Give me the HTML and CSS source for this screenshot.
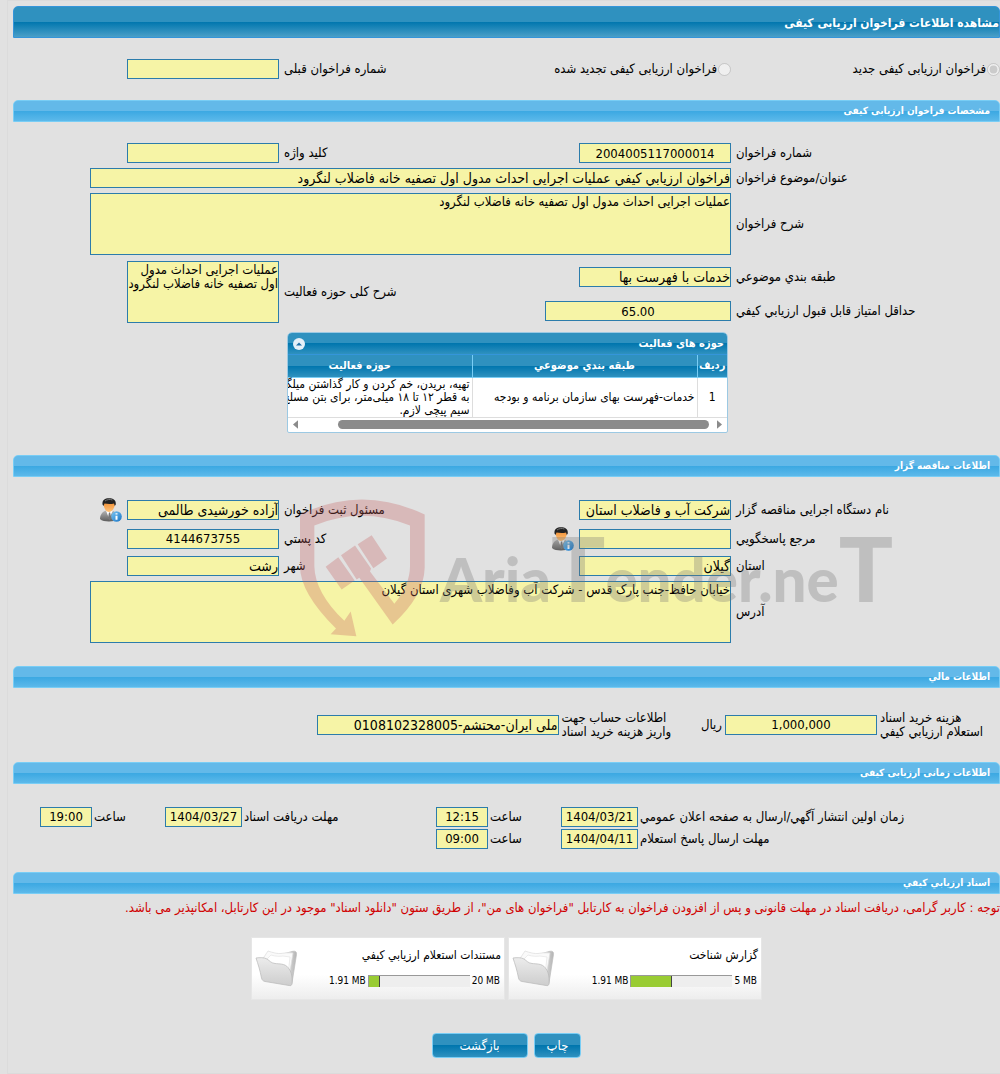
FILE: index.html
```html
<!DOCTYPE html>
<html lang="fa" dir="rtl">
<head>
    <meta charset="UTF-8">
    <meta name="viewport" content="width=device-width, initial-scale=1.0">
    <title>مشاهده اطلاعات فراخوان ارزیابی کیفی</title>
    <link rel="stylesheet" href="styles.css">
</head>
<body>

    <!-- Shared icons -->
    <svg class="sprite" aria-hidden="true">
        <defs>
            <linearGradient id="suit" x1="0" y1="0" x2="0" y2="1">
                <stop offset="0" stop-color="#b5b5b5"/>
                <stop offset="1" stop-color="#5c5c5c"/>
            </linearGradient>
            <linearGradient id="face" x1="0" y1="0" x2="0" y2="1">
                <stop offset="0" stop-color="#f08a2c"/>
                <stop offset="1" stop-color="#ffc37a"/>
            </linearGradient>
            <linearGradient id="info" x1="0" y1="0" x2="1" y2="1">
                <stop offset="0" stop-color="#7cc8f5"/>
                <stop offset="1" stop-color="#1672c4"/>
            </linearGradient>
            <linearGradient id="folderFront" x1="0" y1="0" x2="0" y2="1">
                <stop offset="0" stop-color="#ececec"/>
                <stop offset="1" stop-color="#cdcdcd"/>
            </linearGradient>
            <linearGradient id="folderBack" x1="0" y1="0" x2="1" y2="0">
                <stop offset="0" stop-color="#efefef"/>
                <stop offset="1" stop-color="#b4b4b4"/>
            </linearGradient>
        </defs>
        <symbol id="person" viewBox="0 0 24 24">
            <path d="M1 21c0-5 3-7.500 6-8.500h6c3.500 1 5.500 4 5.500 9-3 2.500-14 3-17.500-.5z" fill="url(#suit)"/>
            <path d="M7 12.500l3 8 4-8z" fill="#fff"/>
            <path d="M10 14.500l-1 5 1.500 3 1.500-3-.8-5z" fill="#777"/>
            <path d="M4.500 5c0 5 2.500 9 5.500 9s6-4 6-9c-2-2.500-9-2.500-11.500 0z" fill="url(#face)"/>
            <path d="M3.500 6.500C3 2 6 .3 10 .3s7.300 1.700 6.800 6.200l-1 1.500-.8-2.500c-3 .8-7 .5-9.500 0L4.500 8z" fill="#222"/>
            <path d="M6 3c2-1.500 5-2 7.500-1" stroke="#777" fill="none"/>
            <circle cx="17.500" cy="18.500" r="5.300" fill="url(#info)"/>
            <path d="M17.500 15.200v1.400M17.500 17.800v4" stroke="#fff" stroke-width="2"/>
        </symbol>
        <symbol id="folder" viewBox="0 0 44 40">
            <path d="M28 6l9-2.500c3-.8 5 0 4.500 3L37 35c-.3 1.500-1 2-2.500 1.500z" fill="url(#folderBack)" stroke="#bbb" stroke-width=".7"/>
            <path d="M7 12l6-9c4 1.500 10 3 13 2.500s7-1 12-.5l-4 24z" fill="#fafafa" stroke="#ddd" stroke-width=".7"/>
            <path d="M11 12l5-5c5 1.500 8 1.500 12 1l7 1-2 18z" fill="#fff" stroke="#e4e4e4" stroke-width=".7"/>
            <path d="M1 10c4-.6 8-.6 11 1 3 2 4 4 8 4.500s10 0 13 4c3 3.500 4.500 8 4 16-.2 1.800-1 2.500-3 2L10 33.500c-2-.4-3-1.500-3.500-3.500C5 22 3 16 1 10z" fill="url(#folderFront)" stroke="#b8b8b8" stroke-width=".7"/>
        </symbol>
    </svg>

    <div class="page">
        <h1 class="title">مشاهده اطلاعات فراخوان ارزیابی کیفی</h1>

        <div class="form kinds">
            <label class="radio"><input type="radio" name="kind" checked disabled>فراخوان ارزیابی کیفی جدید</label>
            <label class="radio second"><input type="radio" name="kind" disabled>فراخوان ارزیابی کیفی تجدید شده</label>
            <label class="l2" for="prevNo">شماره فراخوان قبلی</label>
            <input class="f2" id="prevNo" type="text" readonly>
        </div>

        <h2 class="bar">مشخصات فراخوان ارزیابی کیفی</h2>
        <div class="form specs">
            <label class="l1" for="callNo">شماره فراخوان</label>
            <input class="f1 num" id="callNo" type="text" value="2004005117000014" readonly>
            <label class="l2" for="keyword">کلید واژه</label>
            <input class="f2" id="keyword" type="text" readonly>

            <label class="l1" for="subject">عنوان/موضوع فراخوان</label>
            <input class="wide" id="subject" type="text" value="فراخوان ارزيابي كيفي عملیات اجرایی احداث مدول اول تصفیه خانه فاضلاب لنگرود" readonly>

            <label class="l1" for="desc">شرح فراخوان</label>
            <textarea class="wide" id="desc" readonly>عملیات اجرایی احداث مدول اول تصفیه خانه فاضلاب لنگرود</textarea>

            <label class="l1" for="category">طبقه بندي موضوعي</label>
            <input class="f1" id="category" type="text" value="خدمات با فهرست بها" readonly>
            <label class="l2 both" for="scope">شرح کلی حوزه فعالیت</label>
            <textarea class="f2 both" id="scope" readonly>عملیات اجرایی احداث مدول اول تصفیه خانه فاضلاب لنگرود</textarea>

            <label class="l1" for="score">حداقل امتياز قابل قبول ارزيابي كيفي</label>
            <input class="score num" id="score" type="text" value="65.00" readonly>

            <div class="panel">
                <div class="panel-head">
                    <span>حوزه های فعالیت</span>
                    <button class="collapse" type="button" aria-label="بستن">
                        <svg viewBox="0 0 12 12"><circle cx="6" cy="6" r="6" fill="#e4eff8"/><path d="M3 7.500L6 4.500l3 3z" fill="#1f6fa5"/></svg>
                    </button>
                </div>
                <div class="panel-view">
                    <table>
                        <colgroup><col class="c-row"><col class="c-cat"><col class="c-act"></colgroup>
                        <thead>
                            <tr><th>ردیف</th><th>طبقه بندي موضوعي</th><th>حوزه فعالیت</th></tr>
                        </thead>
                        <tbody>
                            <tr>
                                <td class="center">1</td>
                                <td>خدمات-فهرست بهای سازمان برنامه و بودجه</td>
                                <td>تهیه، بریدن، خم کردن و کار گذاشتن میلگرد<br>به قطر ۱۲ تا ۱۸ میلی‌متر، برای بتن مسلح با<br>سیم پیچی لازم.</td>
                            </tr>
                        </tbody>
                    </table>
                </div>
                <div class="scroll">
                    <svg viewBox="0 0 6 10"><path d="M0 0l6 5-6 5z" fill="#8b8b8b"/></svg>
                    <div class="track"><div class="thumb"></div></div>
                    <svg viewBox="0 0 6 10"><path d="M6 0L0 5l6 5z" fill="#8b8b8b"/></svg>
                </div>
            </div>
        </div>

        <h2 class="bar">اطلاعات مناقصه گزار</h2>
        <div class="form owner">
            <label class="l1" for="org">نام دستگاه اجرایی مناقصه گزار</label>
            <input class="f1" id="org" type="text" value="شرکت آب و فاضلاب استان" readonly>
            <label class="l2" for="clerk">مسئول ثبت فراخوان</label>
            <input class="f2" id="clerk" type="text" value="آزاده خورشیدی طالمی" readonly>
            <button class="who end" type="button" aria-label="مشخصات مسئول ثبت"><svg><use href="#person"/></svg></button>

            <label class="l1" for="contact">مرجع پاسخگويي</label>
            <input class="f1" id="contact" type="text" readonly>
            <button class="who mid" type="button" aria-label="مشخصات مرجع پاسخگويي"><svg><use href="#person"/></svg></button>
            <label class="l2 row2" for="postal">کد پستي</label>
            <input class="f2 num" id="postal" type="text" value="4144673755" readonly>

            <label class="l1" for="province">استان</label>
            <input class="f1" id="province" type="text" value="گیلان" readonly>
            <label class="l2" for="city">شهر</label>
            <input class="f2" id="city" type="text" value="رشت" readonly>

            <label class="l1" for="address">آدرس</label>
            <textarea class="wide" id="address" readonly>خیابان حافظ-جنب پارک قدس - شرکت آب وفاضلاب شهری استان گیلان</textarea>

            <!-- Watermark over the owner block -->
            <div class="watermark" aria-hidden="true">
                <svg viewBox="720 149 375 413">
                    <path d="M720 195Q905 105 1094 195V355Q1092 440 998 525L898 385l-8 5-47-73 42-29 48 69-3 9 73 97Q1050 405 1050 350V228Q905 170 763 228V350Q765 430 853 514l19-28 17 74-77-6 16-17Q720 430 720 350z"/>
                    <path d="M797 352l38-29 49 70-39 27zM893 284l42-27 46 70-41 29z"/>
                </svg>
                <span>Aria<b>T</b>ender.ne<b>T</b></span>
            </div>
        </div>

        <h2 class="bar">اطلاعات مالي</h2>
        <div class="money">
            <label for="fee">هزینه خرید اسناد<br>استعلام ارزيابي كيفي</label>
            <input class="fee num" id="fee" type="text" value="1,000,000" readonly>
            <span class="unit">ریال</span>
            <label for="account">اطلاعات حساب جهت<br>واریز هزینه خرید اسناد</label>
            <input class="account" id="account" type="text" value="ملی ایران-محتشم-0108102328005" readonly>
        </div>

        <h2 class="bar">اطلاعات زمانی ارزیابی کیفی</h2>
        <div class="times">
            <label for="pubDate">زمان اولین انتشار آگهي/ارسال به صفحه اعلان عمومي</label>
            <input class="num" id="pubDate" type="text" value="1404/03/21" readonly>
            <label for="pubTime">ساعت</label>
            <input class="num" id="pubTime" type="text" value="12:15" readonly>
            <label for="docDate">مهلت دریافت اسناد</label>
            <input class="num" id="docDate" type="text" value="1404/03/27" readonly>
            <label for="docTime">ساعت</label>
            <input class="num" id="docTime" type="text" value="19:00" readonly>

            <label class="first" for="ansDate">مهلت ارسال پاسخ استعلام</label>
            <input class="num" id="ansDate" type="text" value="1404/04/11" readonly>
            <label for="ansTime">ساعت</label>
            <input class="num" id="ansTime" type="text" value="09:00" readonly>
        </div>

        <h2 class="bar">اسناد ارزيابي كيفي</h2>
        <p class="notice">توجه : کاربر گرامی، دریافت اسناد در مهلت قانونی و پس از افزودن فراخوان به کارتابل "فراخوان های من"، از طریق ستون "دانلود اسناد" موجود در این کارتابل، امکانپذیر می باشد.</p>

        <div class="files">
            <div class="file">
                <div class="file-body">
                    <div class="file-name">گزارش شناخت</div>
                    <div class="usage">
                        <span dir="ltr">5 MB</span>
                        <div class="meter"><div class="used" style="width: 40%"></div></div>
                        <span dir="ltr">1.91 MB</span>
                    </div>
                </div>
                <svg class="folder"><use href="#folder"/></svg>
            </div>
            <div class="file">
                <div class="file-body">
                    <div class="file-name">مستندات استعلام ارزيابي كيفي</div>
                    <div class="usage">
                        <span dir="ltr">20 MB</span>
                        <div class="meter"><div class="used" style="width: 11%"></div></div>
                        <span dir="ltr">1.91 MB</span>
                    </div>
                </div>
                <svg class="folder"><use href="#folder"/></svg>
            </div>
        </div>

        <div class="actions">
            <button class="btn" type="button">چاپ</button>
            <button class="btn back" type="button">بازگشت</button>
        </div>
    </div>

</body>
</html>
```
FILE: styles.css
```css
* {
    box-sizing: border-box;
}

body {
    margin: 0;
    background: #e1e1e1;
    color: #000;
    font-family: "DejaVu Sans Condensed", "DejaVu Sans", sans-serif;
    font-size: 13px;
    line-height: 14px;
}

.sprite {
    position: absolute;
    width: 0;
    height: 0;
}

.page {
    margin-left: 7px;
    padding: 5px 0 15px 5px;
    border: 1px solid #dbdbdb;
    border-right: 0;
}

/* Title and section bars */
.title {
    margin: 0;
    height: 32px;
    border: 1px solid #3495da;
    border-radius: 5px 5px 0 0;
    background: linear-gradient(#2f91bf 0 50%, #0076ae 50%, #4a9fc8);
    color: #fff;
    font-size: 12px;
    line-height: 32px;
}

.bar {
    margin: 0;
    height: 22px;
    padding: 0 9px;
    border: 1px solid #78cdf5;
    border-radius: 5px 5px 0 0;
    background: linear-gradient(#63b9e9 0 50%, #3ba8e2 50%, #5cb9ea);
    color: #fff;
    font-size: 10px;
    line-height: 20px;
}

/* Fields */
input,
textarea {
    font-family: inherit;
    color: #000;
}

input[type="text"],
textarea {
    display: block;
    width: 100%;
    height: 20px;
    margin: 0;
    padding: 0;
    border: 1px solid #2c7cab;
    border-radius: 0;
    background: #f6f4a6;
    font-size: 14px;
}

textarea {
    height: 62px;
    padding: 1px 0;
    font-size: 13px;
    line-height: 14px;
    resize: none;
    overflow: hidden;
}

input[type="text"].num {
    direction: ltr;
    text-align: center;
    font-size: 13px;
}

input[type="radio"] {
    width: 13px;
    height: 13px;
    margin: 0;
}

.form {
    position: relative;
    display: grid;
    grid-template-columns: 269fr 152px 300fr 152px 114fr;
    row-gap: 5px;
    align-items: center;
    padding: 21px 0 22px;
}

.l1,
.l2 {
    padding-left: 5px;
    text-align: left;
}

.l1 { grid-column: 1; }
.f1 { grid-column: 2; }
.l2 { grid-column: 3; }
.f2 { grid-column: 4; }

.wide {
    grid-column: 2 / -1;
    max-width: 641px;
}

.kinds {
    padding-bottom: 21px;
}

.kinds > * {
    grid-row: 1;
}

.radio {
    display: flex;
    align-items: center;
    gap: 1px;
}

.second {
    grid-column: 2 / 4;
    justify-self: start;
}

.specs {
    grid-template-rows: auto auto auto minmax(34px, auto) minmax(24px, auto);
}

.both {
    grid-row: 4 / 6;
}

.score {
    grid-column: 2 / 4;
    grid-row: 5;
    max-width: 186px;
}

/* Activity table */
.panel {
    grid-column: 2 / -1;
    width: 441px;
    max-width: 100%;
    margin: 4px 3px 0 0;
    border: 1px solid #9cc9e3;
    border-radius: 5px 5px 2px 2px;
    background: #fff;
    overflow: hidden;
}

.panel-head {
    display: flex;
    justify-content: space-between;
    align-items: center;
    height: 22px;
    padding: 0 3px 0 5px;
    border-bottom: 1px solid #3495da;
    background: linear-gradient(#2f91bf 0 50%, #0076ae 50%, #2f91bf);
    color: #fff;
    font-size: 11px;
    font-weight: bold;
}

.collapse {
    width: 12px;
    height: 12px;
    padding: 0;
    border: 0;
    background: none;
}

.collapse svg {
    display: block;
}

.panel-view {
    overflow: hidden;
}

.panel table {
    width: 480px;
    table-layout: fixed;
    border-collapse: collapse;
    font-size: 12px;
    line-height: 13px;
}

.c-row { width: 30px; }
.c-cat { width: 225px; }

.panel th {
    height: 22px;
    padding: 0;
    border-left: 1px solid #78cdf5;
    border-bottom: 1px solid #78cdf5;
    background: linear-gradient(#2f91bf 0 50%, #0076ae 50%, #2f91bf);
    color: #fff;
    font-size: 11px;
}

.panel td {
    padding: 0 2px;
    border-left: 1px solid #ddd;
    border-bottom: 1px solid #ddd;
    white-space: nowrap;
}

.panel td.center {
    text-align: center;
}

.scroll {
    display: flex;
    align-items: center;
    gap: 8px;
    height: 14px;
    padding: 0 5px;
}

.scroll svg {
    width: 5px;
    height: 9px;
}

.track {
    flex: 1;
}

.thumb {
    width: 92%;
    height: 9px;
    border-radius: 5px;
    background: #8b8b8b;
}

/* Tenderer */
.owner {
    grid-template-rows: 24px 24px auto auto;
    padding-bottom: 23px;
}

.who {
    justify-self: start;
    width: 24px;
    height: 24px;
    margin-right: 4px;
    padding: 0;
    border: 0;
    background: none;
}

.who svg {
    display: block;
    width: 24px;
    height: 24px;
}

.who.end { grid-area: 1 / 5; }
.who.mid { grid-area: 2 / 3; }
.row2 { grid-row: 2; }

.watermark {
    position: absolute;
    top: 22px;
    left: 287px;
    display: flex;
    direction: ltr;
    gap: 15px;
    pointer-events: none;
    color: #737373;
    opacity: 0.3;
}

.watermark svg {
    width: 125px;
    height: 138px;
    fill: #c65f5f;
}

.watermark span {
    font-family: Lato, "Liberation Sans", sans-serif;
    font-size: 60px;
    font-weight: 900;
    line-height: 160px;
    white-space: nowrap;
}

.watermark b {
    font-size: 90px;
    line-height: 1;
}

/* Financial */
.money {
    display: flex;
    align-items: center;
    padding: 23px 11px 23px 0;
}

.money label {
    min-width: 109px;
    text-align: left;
}

.money .fee {
    width: 152px;
    margin: 0 3px;
}

.unit {
    margin-left: 30px;
}

.money .account {
    width: 242px;
    margin-right: 3px;
}

/* Schedule */
.times {
    display: grid;
    grid-template-columns: 362fr 77px 73px 52px 194fr 77px 73px 52px 27fr;
    gap: 2px 0;
    align-items: center;
    padding: 23px 0;
}

.times label {
    padding-left: 2px;
    text-align: left;
}

.times .first {
    grid-column: 1;
}

/* Documents */
.notice {
    margin: 6px 0 22px;
    color: #d00000;
    line-height: 15px;
}

.files {
    display: flex;
    justify-content: center;
    gap: 3px;
}

.file {
    display: flex;
    align-items: center;
    width: 254px;
    height: 63px;
    padding: 0 3px;
    border: 1px solid #e6e6e6;
    background: linear-gradient(#fff 60%, #ededed);
    font-size: 10px;
}

.file-body {
    flex: 1;
}

.file-name {
    margin-bottom: 12px;
    font-size: 12px;
}

.usage {
    display: flex;
    align-items: center;
    gap: 2px;
    padding-right: 1px;
}

.meter {
    direction: ltr;
    width: 102px;
    height: 12px;
    border-top: 1px solid #999;
    border-left: 1px solid #999;
    background: #eee;
}

.used {
    height: 11px;
    border-right: 1px solid #444;
    background: #9c3;
}

.folder {
    width: 44px;
    height: 40px;
}

.actions {
    display: flex;
    justify-content: center;
    gap: 6px;
    margin-top: 33px;
}

.btn {
    min-width: 47px;
    height: 25px;
    padding: 0 12px;
    border: 1px solid #78cdf5;
    border-radius: 4px;
    background: linear-gradient(#2f91bf 0 50%, #0076ae 50%, #2f91bf);
    color: #fff;
    font-family: inherit;
    font-size: 13px;
}

.btn.back {
    min-width: 96px;
}
```
